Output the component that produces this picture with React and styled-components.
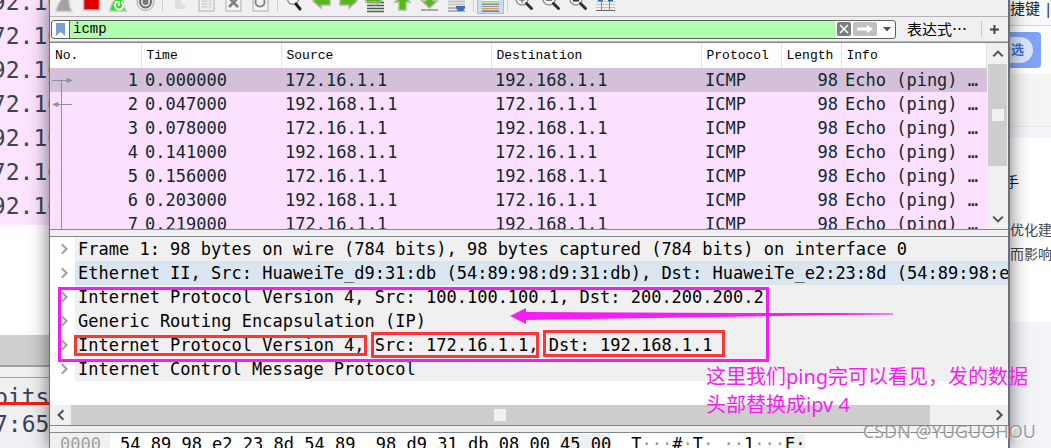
import React, {Component} from 'react'
import styled, {createGlobalStyle} from 'styled-components'

const mono = '"DejaVu Sans Mono", "Liberation Mono", "Noto Sans CJK SC", monospace'
const cjk = '"Noto Sans", "Noto Sans CJK SC", sans-serif'

const GlobalStyle = createGlobalStyle`
    * { box-sizing: border-box; }
    body { margin: 0; overflow: hidden; background: #fff; }
    button { padding: 0; border: 0; background: none; font: inherit; color: inherit; }
    svg { display: block; }
`

const Desktop = styled.div`
    display: flex;
    height: 100vh;
    overflow: hidden;
`

/* window behind, on the left */

const BackLeft = styled.div`
    flex: 0 0 49px;
    overflow: hidden;
    background: #fff;
    color: #3a4358;
    font: 23px/34px ${mono};
    white-space: nowrap;
`

const BackPackets = styled.div`
    height: 225px;
    overflow: hidden;
    background: #fce4ff;
    text-indent: -22px;
`

const BackPacket = styled.div`
    height: 34px;
    &:first-child { margin-top: -15px; }
`

const BackScroll = styled.div`
    height: 30px;
    margin-top: 110px;
    background: #cfcfcf;
`

const BackSplit = styled.div`
    height: 13px;
    border: solid #a0a0a4;
    border-width: 2px 0 1px;
    background: #f0f0f0;
`

const BackTree = styled.div`
    background: #f0f0f2;
    line-height: 38px;
    height: 100px;
`

const BackLine = styled.div`
    height: ${props => props.$marked ? 27 : 60}px;
    overflow: hidden;
    text-indent: -6px;
    border-bottom: ${props => props.$marked ? '3px solid #f32010' : '0'};
`

/* web page behind, on the right */

const BackRight = styled.div`
    flex: 0 0 41px;
    display: flex;
    flex-direction: column;
    overflow: hidden;
    background: #fff;
    color: #44444c;
    font: 14px/24px ${cjk};
    white-space: nowrap;
`

const PageTop = styled.div`
    height: 26px;
    padding-top: 4px;
    border-bottom: 1px solid #d4d4d8;
    background: #f9f9fb;
    font-size: 15px;
    line-height: 8px;
    color: #222;
`

const PageFilter = styled.div`
    height: 48px;
    padding-top: 6px;
`

const PillButton = styled.button`
    display: flex;
    align-items: center;
    width: 31px;
    height: 36px;
    border-radius: 0 4px 4px 0;
    background: #7fa3fa;
`

const PillLabel = styled.span`
    width: 23px;
    height: 26px;
    border-radius: 0 13px 13px 0;
    background: #dce6fb;
    color: #3f6fe0;
    font-size: 13px;
    font-weight: bold;
    text-indent: 1px;
    text-align: left;
`

const PageBand = styled.div`
    height: 64px;
    border-bottom: 11px solid #f4f5f8;
    background: #f4f4f4;
    box-shadow: inset 0 -1px #e4e8ea;
`

const PageText = styled.div`
    height: 184px;
    padding-top: 32px;
`

const PageLine = styled.p`
    margin: 0;
    &:first-child { margin-bottom: 24px; text-indent: -5px; color: #111; }
`

const PageFoot = styled.div`
    flex: 1;
    background: #f3f4f7;
`

/* main window */

const Window = styled.main`
    position: relative;
    z-index: 1;
    flex: 1;
    min-width: 0;
    height: 100vh;
    border: solid #6e6e78;
    border-width: 0 2px 0 1px;
    background: #f0f0f0;
    box-shadow: 0 0 18px rgba(0, 0, 0, 0.55);
    font: 17px/24px ${mono};
    color: #000;
`

const Toolbar = styled.div`
    display: flex;
    height: 17px;
    padding-left: 1px;
    border-bottom: 1px solid #b4b4b4;
    background: #f0f0f0;
`

const Tool = styled.button`
    width: 27px;
    height: 14px;
    border: ${props => props.$on ? '1px solid #8fc0e8' : '0'};
    border-top: 0;
    background: ${props => props.$on ? '#c6dff5' : 'none'};
    display: flex;
    justify-content: center;
`

const ToolSeparator = styled.span`
    width: 1px;
    height: 12px;
    margin: 0 3px;
    background: #cfcfcf;
`

const FilterBar = styled.form`
    display: flex;
    align-items: center;
    height: 25px;
    margin: 0;
    padding: 0 1px;
    border-bottom: 1px solid #b8b8b8;
`

const FilterField = styled.div`
    flex: 1;
    display: flex;
    align-items: center;
    height: 19px;
    border: 1px solid #606060;
    border-radius: 3px;
    background: #fff;
    overflow: hidden;
`

const Bookmark = styled.button`
    width: 18px;
    height: 17px;
    padding-left: 4px;
    border-right: 1px solid #606060;
`

const FilterInput = styled.input`
    flex: 1;
    min-width: 0;
    height: 17px;
    padding: 0 3px;
    border: 0;
    outline: 0;
    background: #afffaf;
    font: 14px/17px "Liberation Mono", monospace;
    color: #000;
`

const FieldButton = styled.button`
    width: ${props => props.$width}px;
    height: 14px;
    margin-left: 2px;
    border-radius: 2px;
    background: ${props => props.$fill || 'none'};
    display: flex;
    align-items: center;
    justify-content: center;
`

const Expression = styled.button`
    width: 86px;
    padding-left: 11px;
    border-right: 1px solid #c8c8c8;
    font: 15px/16px ${cjk};
    text-align: left;
`

const AddFilter = styled.button`
    width: 25px;
    height: 17px;
    display: flex;
    align-items: center;
    justify-content: center;
`

const ListPane = styled.section`
    display: flex;
    height: 188px;
    border: solid #828790;
    border-width: 1px 0;
    background: #fff;
    overflow: hidden;
`

const ListBody = styled.div`
    flex: 1;
    min-width: 0;
`

const PacketTable = styled.table`
    width: 100%;
    table-layout: fixed;
    border-collapse: collapse;
    color: #12272e;
`

const HeadCell = styled.th`
    width: ${props => props.$width ? props.$width + 'px' : 'auto'};
    height: 25px;
    padding: 0 5px;
    border-right: 1px solid #e2e2e2;
    background: #fff;
    color: #000;
    font: 13px/24px "Liberation Mono", monospace;
    text-align: left;
`

const PacketRow = styled.tr`
    height: 24px;
    background: ${props => props.$selected ? '#d5c0d9' : '#fce0ff'};
`

const Cell = styled.td`
    height: 24px;
    padding: 0 3px 0 4px;
    text-align: ${props => props.$right ? 'right' : 'left'};
    white-space: nowrap;
    overflow: hidden;
`

const NumberCell = styled.div`
    display: flex;
    justify-content: space-between;
    height: 24px;
    margin-left: -4px;
`

const VerticalBar = styled.div`
    display: flex;
    flex-direction: column;
    flex: 0 0 21px;
    padding: 0 1px;
    background: #f0f0f0;
`

const VerticalThumb = styled.div`
    display: flex;
    align-items: center;
    justify-content: center;
    height: 102px;
    background: #cdcdcd;
`

const Grip = styled.span`
    width: 12px;
    height: 12px;
    background: #f0f0f0;
`

const ScrollButton = styled.button`
    flex: 0 0 21px;
    display: flex;
    align-items: center;
    justify-content: center;
    &:last-child { margin-top: auto; }
`

const DetailPane = styled.section`
    position: relative;
    margin-top: 6px;
    border: solid #828790;
    border-width: 1px 0;
    background: #fff;
`

const Tree = styled.ul`
    margin: 0;
    padding: 0 0 24px;
    list-style: none;
`

const TreeRow = styled.li`
    display: flex;
    height: 24px;
`

const Expander = styled.button`
    flex: 0 0 25px;
    display: flex;
    align-items: center;
    justify-content: center;
`

const TreeText = styled.span`
    flex: 1;
    min-width: 0;
    padding-left: 3px;
    background: ${props => props.$related ? '#d9e6f0' : '#f0f0f0'};
    white-space: nowrap;
    overflow: hidden;
`

const HorizontalBar = styled.div`
    display: flex;
    height: 20px;
    background: #f0f0f0;
`

const HorizontalThumb = styled.div`
    flex: 15;
    display: flex;
    align-items: center;
    justify-content: center;
    background: #cdcdcd;
`

const Track = styled.div`
    flex: 1;
`

const BarButton = styled.button`
    flex: 0 0 21px;
    display: flex;
    align-items: center;
    justify-content: center;
`

const HexPane = styled.section`
    display: flex;
    margin-top: 6px;
    border-top: 1px solid #828790;
    background: #fff;
    line-height: 22px;
    white-space: pre;
`

const Offset = styled.span`
    width: 60px;
    padding-left: 10px;
    background: #f0f0f0;
    color: #a0a0a0;
`

const Bytes = styled.span`
    padding-left: ${props => props.$gap}px;
`

const Field = styled.span`
    background: #f0f0f0;
`

const Dot = styled.span`
    color: #999;
`

/* marks drawn over the detail pane */

const Mark = styled.div`
    position: absolute;
    left: ${props => props.$left}px;
    top: ${props => props.$top}px;
    width: ${props => props.$width}px;
    height: ${props => props.$height}px;
    border: 3px solid ${props => props.$color || '#fb3636'};
`

const ArrowMark = styled.svg`
    position: absolute;
    left: 460px;
    top: 70px;
`

const Note = styled.p`
    position: absolute;
    left: 656px;
    top: 126px;
    margin: 0;
    color: #f41ef4;
    font: 20px/28px ${cjk};
    white-space: nowrap;
`

const Watermark = styled.div`
    position: absolute;
    right: -28px;
    top: 419px;
    color: rgba(140, 140, 140, 0.85);
    font: 18px/24px "Noto Sans", sans-serif;
    text-shadow: 1px 1px #fff;
    white-space: nowrap;
`

const packets = [
    ['0.000000', '172.16.1.1', '192.168.1.1'],
    ['0.047000', '192.168.1.1', '172.16.1.1'],
    ['0.078000', '172.16.1.1', '192.168.1.1'],
    ['0.141000', '192.168.1.1', '172.16.1.1'],
    ['0.156000', '172.16.1.1', '192.168.1.1'],
    ['0.203000', '192.168.1.1', '172.16.1.1'],
    ['0.219000', '172.16.1.1', '192.168.1.1'],
]

const layers = [
    'Frame 1: 98 bytes on wire (784 bits), 98 bytes captured (784 bits) on interface 0',
    'Ethernet II, Src: HuaweiTe_d9:31:db (54:89:98:d9:31:db), Dst: HuaweiTe_e2:23:8d (54:89:98:e2:',
    'Internet Protocol Version 4, Src: 100.100.100.1, Dst: 200.200.200.2',
    'Generic Routing Encapsulation (IP)',
    'Internet Protocol Version 4, Src: 172.16.1.1, Dst: 192.168.1.1',
    'Internet Control Message Protocol',
]

const backPackets = ['192.16', '172.16', '192.16', '172.16', '192.16', '172.16', '192.16']

const columns = [['No.', 91], ['Time', 140], ['Source', 210], ['Destination', 210], ['Protocol', 80], ['Length', 60], ['Info']]

const chevrons = {
    right: 'M4 1l4 4-4 4',
    left: 'M7 1L3 5l4 4',
    up: 'M1 7l4-4 4 4',
    down: 'M1 3l4 4 4-4',
}

const Chevron = ({dir, color = '#505050'}) => (
    <svg width="12" height="12" viewBox="0 0 10 10" fill="none" stroke={color} strokeWidth="1.7">
        <path d={chevrons[dir]}/>
    </svg>
)

const paper = <path d="M6 -6h15v17h-15z" fill="#f4f4f4" stroke="#c4c4c4" strokeWidth="1.5"/>
const lens = (
    <React.Fragment>
        <circle cx="11" cy="-1" r="6" fill="#f2f4f4" stroke="#8c9496" strokeWidth="1.5"/>
        <path d="M15.500 3.500l5 5" stroke="#2e3436" strokeWidth="3" strokeLinecap="round"/>
    </React.Fragment>
)
const green = {fill: '#58b818', stroke: '#a9b8a0', strokeWidth: 1.5}

const toolGroups = [
    [
        ['Start', <path d="M5 11.500C6 4 9-2 19-6c-2 6-1 12 2 17.500z" fill="#a2a2a2" stroke="#d2d2d2" strokeWidth="1.5"/>],
        ['Stop', <path d="M5.500-6h16v16h-16z" fill="#dc0000" stroke="#c4c4c4" strokeWidth="1.5"/>],
        ['Restart', <React.Fragment>
            <path d="M5 11C6 4 9-2 19-6c-2 6-1 12 2 17z" fill="#20e820" stroke="#b4cab4" strokeWidth="1.5"/>
            <path d="M11 3a4 4 0 1 0 5-1M10 2h4v4" fill="none" stroke="#fff" strokeWidth="2"/>
        </React.Fragment>],
        ['Options', <React.Fragment>
            <circle cx="13.5" cy="2" r="8.5" fill="#e8e8e8" stroke="#a8a8a8"/>
            <circle cx="13.5" cy="2" r="5.5" fill="none" stroke="#707070" strokeWidth="2"/>
            <circle cx="13.5" cy="2" r="3" fill="#777"/>
        </React.Fragment>],
    ],
    [
        ['Open', <path d="M9-4h6v8l4 1v4H9z" fill="#dedede"/>],
        ['Save', <React.Fragment>{paper}<path d="M8 1h11M8 4h11M8 7h11M10-1v10M13-1v10M17-1v10" stroke="#d0d0d0"/></React.Fragment>],
        ['Close', <React.Fragment>{paper}<path d="M9-2l9 9M18-2l-9 9" stroke="#808080" strokeWidth="2.5"/></React.Fragment>],
        ['Reload', <React.Fragment>{paper}<path d="M9 0a4.500 4.500 0 1 0 8 0" fill="none" stroke="#8a8a8a" strokeWidth="2"/></React.Fragment>],
    ],
    [
        ['Find', <React.Fragment>
            <circle cx="12" cy="-1" r="5.5" fill="#f4f4f4" stroke="#999" strokeWidth="1.5"/>
            <path d="M15 4l4 5" stroke="#222" strokeWidth="3" strokeLinecap="round"/>
        </React.Fragment>],
        ['Back', <path d="M5 1l8-7v3h9v8h-9v3z" {...green}/>],
        ['Forward', <path d="M22 1l-8-7v3h-9v8h9v3z" {...green}/>],
        ['Go to packet', <React.Fragment>
            <path d="M5 2.500h17M5 5.500h17M5 8.500h17M5 11.500h17" stroke="#505850" strokeWidth="1.5"/>
            <path d="M4-2h10v-3l6 5-6 5V2H4z" {...green}/>
        </React.Fragment>],
        ['First', <path d="M10 10V2H6l7.500-7 7.500 7h-4v8z" {...green}/>],
        ['Last', <React.Fragment>
            <path d="M10-3v4H6l7.500 7 7.500-7h-4v-4z" {...green}/>
            <path d="M5 10h17" stroke="#a8a8a8" strokeWidth="2"/>
        </React.Fragment>],
        ['Auto scroll', <React.Fragment>
            <path d="M5 1.500h17M5 4.500h17" stroke="#c8c8c4" strokeWidth="2"/>
            <path d="M5 8h17M5 11h17" stroke="#74746e"/>
            <path d="M13 6h9v2l-2 3h-5l-2-3z" fill="#3c6eb4"/>
        </React.Fragment>],
    ],
    [
        ['Colorize', <React.Fragment>
            <path d="M4-2h19v14H4z" fill="#f4f4f4"/>
            <path d="M4 1.500h19" stroke="#8ae234" strokeWidth="1.5"/>
            <path d="M4 4h19" stroke="#5c83b8" strokeWidth="1.5"/>
            <path d="M4 6.500h19" stroke="#ad7fa8" strokeWidth="1.5"/>
            <path d="M4 9h19" stroke="#d0a030" strokeWidth="1.5"/>
            <path d="M4 11.500h19" stroke="#666" strokeWidth="1.5"/>
        </React.Fragment>],
    ],
    [
        ['Zoom in', <React.Fragment>{lens}<path d="M8 0h6M11-3v6" stroke="#555"/></React.Fragment>],
        ['Zoom out', <React.Fragment>{lens}<path d="M8 .5h6" stroke="#777"/></React.Fragment>],
        ['Normal size', <React.Fragment>{lens}<path d="M8 .5h6" stroke="#333" strokeWidth="2"/></React.Fragment>],
        ['Resize columns', <React.Fragment>
            <path d="M4 1.500h19M4 4.500h19M4 7.500h19" stroke="#c4c4c0"/>
            <path d="M4 10.500h19" stroke="#666"/>
            <path d="M9.500 0v11M17.500 0v11" stroke="#888"/>
            <path d="M6 0h5M16 0h5" stroke="#3465a4" strokeWidth="2.5"/>
        </React.Fragment>],
    ],
]

const Relation = ({index}) => (
    <svg width="26" height="24" viewBox="0 0 26 24" fill="#8a9398" stroke="#8a9398">
        <path d={index === 0 ? 'M11.500 12v12' : 'M11.500 0v24'}/>
        {index === 0 && <path d="M2 12.500h15M17 10.500l5 2-5 2z"/>}
        {index === 1 && <path d="M22 12.500H7M8 10.500l-5 2 5 2z"/>}
    </svg>
)

class App extends Component {
    state = {filter: 'icmp'}

    onFilterChange = e => {
        this.setState({filter: e.target.value})
    }

    render() {
        return (
            <Desktop>
                <GlobalStyle/>
                <BackLeft>
                    <BackPackets>
                        {backPackets.map((text, i) => <BackPacket key={i}>{text}</BackPacket>)}
                    </BackPackets>
                    <BackScroll/>
                    <BackSplit/>
                    <BackTree>
                        <BackLine $marked>bits</BackLine>
                        <BackLine>7:65</BackLine>
                    </BackTree>
                </BackLeft>

                <Window>
                    <Toolbar>
                        {toolGroups.map((group, i) => (
                            <React.Fragment key={i}>
                                {i > 0 && <ToolSeparator/>}
                                {group.map(([name, drawing]) => (
                                    <Tool key={name} aria-label={name} $on={name === 'Colorize'}>
                                        <svg width="27" height="13" viewBox="0 0 27 13">{drawing}</svg>
                                    </Tool>
                                ))}
                            </React.Fragment>
                        ))}
                    </Toolbar>

                    <FilterBar onSubmit={e => e.preventDefault()}>
                        <FilterField>
                            <Bookmark type="button" aria-label="Bookmarks">
                                <svg width="9" height="13" viewBox="0 0 9 13"><path d="M0 0h9v13l-4.500-4L0 13z" fill="#78a0d0"/></svg>
                            </Bookmark>
                            <FilterInput aria-label="Display filter" value={this.state.filter} onChange={this.onFilterChange}/>
                            <FieldButton type="button" aria-label="Clear" $width={14} $fill="#7c7e7c">
                                <svg width="10" height="10" viewBox="0 0 10 10" stroke="#fff" strokeWidth="1.5"><path d="M1 1l8 8M9 1L1 9"/></svg>
                            </FieldButton>
                            <FieldButton aria-label="Apply" $width={24} $fill="#c0c0c0">
                                <svg width="18" height="10" viewBox="0 0 18 10"><path d="M1 3.500h10V1l6 4-6 4V6.500H1z" fill="#fff"/></svg>
                            </FieldButton>
                            <FieldButton type="button" aria-label="Recent filters" $width={16}>
                                <svg width="8" height="5" viewBox="0 0 8 5"><path d="M0 0h8L4 4.500z" fill="#505050"/></svg>
                            </FieldButton>
                        </FilterField>
                        <Expression type="button">表达式⋯</Expression>
                        <AddFilter type="button" aria-label="Add filter button">
                            <svg width="9" height="9" viewBox="0 0 9 9" stroke="#444" strokeWidth="2"><path d="M4.500 0v9M0 4.500h9"/></svg>
                        </AddFilter>
                    </FilterBar>

                    <ListPane>
                        <ListBody>
                            <PacketTable>
                                <thead>
                                    <tr>
                                        {columns.map(([name, width]) => <HeadCell key={name} $width={width}>{name}</HeadCell>)}
                                    </tr>
                                </thead>
                                <tbody>
                                    {packets.map(([time, source, destination], i) => (
                                        <PacketRow key={time} $selected={i === 0}>
                                            <Cell><NumberCell><Relation index={i}/>{i + 1}</NumberCell></Cell>
                                            <Cell>{time}</Cell>
                                            <Cell>{source}</Cell>
                                            <Cell>{destination}</Cell>
                                            <Cell>ICMP</Cell>
                                            <Cell $right>98</Cell>
                                            <Cell>Echo (ping) …</Cell>
                                        </PacketRow>
                                    ))}
                                </tbody>
                            </PacketTable>
                        </ListBody>
                        <VerticalBar>
                            <ScrollButton aria-label="Scroll up"><Chevron dir="up"/></ScrollButton>
                            <VerticalThumb><Grip/></VerticalThumb>
                            <ScrollButton aria-label="Scroll down"><Chevron dir="down"/></ScrollButton>
                        </VerticalBar>
                    </ListPane>

                    <DetailPane>
                        <Tree>
                            {layers.map((text, i) => (
                                <TreeRow key={text}>
                                    <Expander aria-label="Expand"><Chevron dir="right" color="#a0a0a0"/></Expander>
                                    <TreeText $related={i === 1}>{text}</TreeText>
                                </TreeRow>
                            ))}
                        </Tree>
                        <HorizontalBar>
                            <BarButton aria-label="Scroll left"><Chevron dir="left"/></BarButton>
                            <HorizontalThumb><Grip/></HorizontalThumb>
                            <Track/>
                            <BarButton aria-label="Scroll right"><Chevron dir="right"/></BarButton>
                        </HorizontalBar>

                        <Mark $left={8} $top={50} $width={711} $height={75} $color="#f41ef4"/>
                        <Mark $left={24} $top={98} $width={293} $height={21}/>
                        <Mark $left={321} $top={95} $width={168} $height={26}/>
                        <Mark $left={493} $top={93} $width={182} $height={27}/>
                        <ArrowMark width="384" height="18" viewBox="0 0 384 18" fill="#f41ef4">
                            <path d="M0 9L16 1v4l210 1 100 0 57 0.500v1l-57 0.500L16 13v4z"/>
                        </ArrowMark>
                        <Note>这里我们ping完可以看见，发的数据<br/>头部替换成ipv 4</Note>
                    </DetailPane>

                    <HexPane>
                        <Offset>0000</Offset>
                        <Bytes $gap={10}>54 89 98 e2 23 8d 54 89  98 d9 31 db 08 00 <Field>45 00</Field></Bytes>
                        <Bytes $gap={20}>
                            T<Dot>···</Dot>#<Dot>·</Dot>T<Dot>·</Dot> <Dot>··</Dot>1<Dot>···</Dot><Field>E·</Field>
                        </Bytes>
                    </HexPane>
                    <Watermark>CSDN @YUGUOHOU</Watermark>
                </Window>

                <BackRight>
                    <PageTop>捷键 |</PageTop>
                    <PageFilter>
                        <PillButton><PillLabel>选</PillLabel></PillButton>
                    </PageFilter>
                    <PageBand/>
                    <PageText>
                        <PageLine>手</PageLine>
                        <PageLine>优化建</PageLine>
                        <PageLine>而影响</PageLine>
                    </PageText>
                    <PageFoot/>
                </BackRight>
            </Desktop>
        )
    }
}

export default App
